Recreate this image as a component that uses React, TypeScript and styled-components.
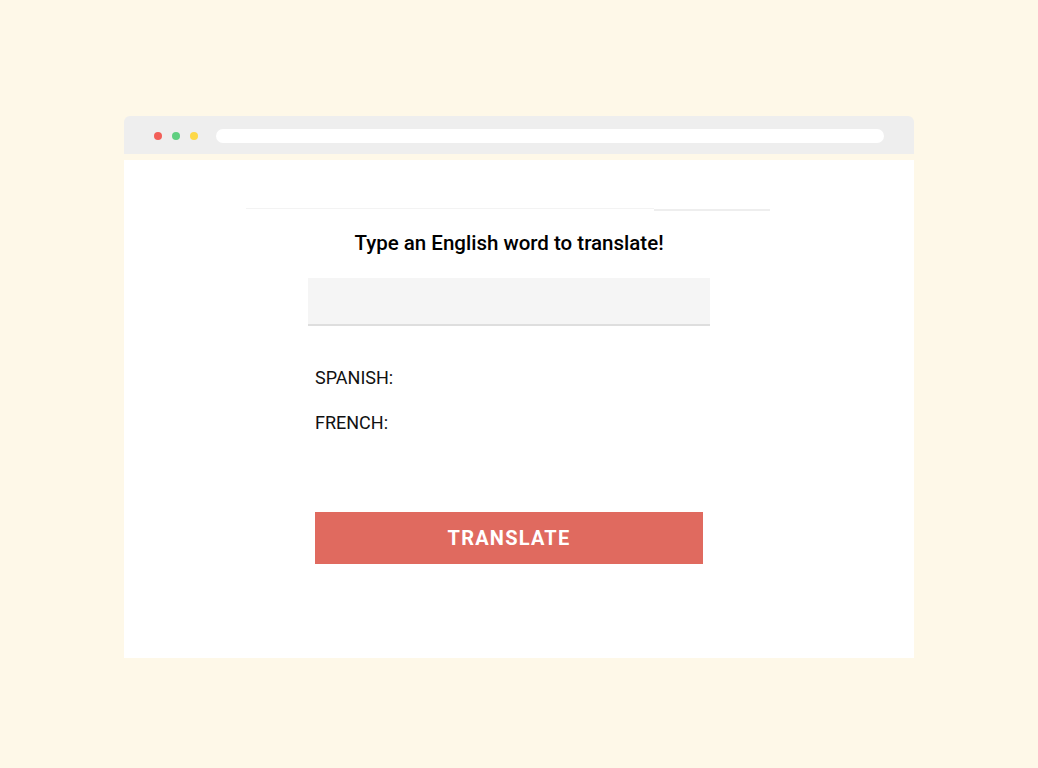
import React from "react";
import styled, { createGlobalStyle } from "styled-components";

const Global = createGlobalStyle`
  html, body { margin: 0; padding: 0; background: #fef8e8; }
  body { font-family: Roboto, "Liberation Sans", sans-serif; }
`;

const Page = styled.div`
  width: 1038px;
  height: 768px;
  padding: 116px 0 0 124px;
  box-sizing: border-box;
`;

const Window = styled.div`
  width: 790px;
  display: flex;
  flex-direction: column;
  gap: 6px;
`;

const TopBar = styled.div`
  height: 38px;
  box-sizing: border-box;
  padding: 2px 30px 0 30px;
  background: #eeeeee;
  border-radius: 6px 6px 0 0;
  display: flex;
  align-items: center;
`;

const Dots = styled.div`
  display: flex;
  gap: 10px;
  margin-right: 18px;
`;

const Dot = styled.span<{ $c: string }>`
  width: 8px;
  height: 8px;
  border-radius: 50%;
  background: ${(p) => p.$c};
`;

const UrlBar = styled.div`
  flex: 1;
  height: 14px;
  border-radius: 7px;
  background: #ffffff;
`;

const Content = styled.div`
  height: 498px;
  background: #ffffff;
  box-sizing: border-box;
  padding-top: 48px;
  display: flex;
  flex-direction: column;
`;

const TabRule = styled.div`
  display: flex;
  align-items: flex-start;
  margin-left: 122px;
  height: 3px;
`;

const Seg = styled.div<{ $w: number; $h: number; $off: number; $c: string }>`
  width: ${(p) => p.$w}px;
  height: ${(p) => p.$h}px;
  margin-top: ${(p) => p.$off}px;
  background: ${(p) => p.$c};
`;

const Column = styled.div`
  margin-left: 184px;
  width: 402px;
  display: flex;
  flex-direction: column;
`;

const Heading = styled.h1`
  margin: 20px 0 0 0;
  font-size: 20.5px;
  line-height: 24px;
  font-weight: 500;
  color: #000000;
  text-align: center;
`;

const Input = styled.input`
  margin-top: 23px;
  height: 48px;
  box-sizing: border-box;
  border: none;
  border-bottom: 2px solid #dedede;
  background: #f5f5f5;
  outline: none;
  padding: 0 8px;
  font: inherit;
`;

const Results = styled.div`
  margin-top: 42px;
  padding-left: 7px;
  display: flex;
  flex-direction: column;
  gap: 25px;
`;

const Label = styled.div`
  font-size: 18px;
  line-height: 20px;
  color: #111111;
`;

const Button = styled.button`
  margin: 79px 7px 0 7px;
  height: 52px;
  border: none;
  background: #e06a5f;
  color: #ffffff;
  font-family: Roboto, "Liberation Sans", sans-serif;
  font-weight: 700;
  font-size: 20px;
  letter-spacing: 1.2px;
  cursor: pointer;
`;

export default function App() {
  return (
    <>
      <Global />
      <Page>
        <Window>
          <TopBar>
            <Dots>
              <Dot $c="#f25f58" />
              <Dot $c="#5fcf80" />
              <Dot $c="#fdd848" />
            </Dots>
            <UrlBar />
          </TopBar>
          <Content>
            <TabRule>
              <Seg $w={408} $h={1} $off={0} $c="#f3f3f3" />
              <Seg $w={116} $h={2} $off={1} $c="#eeeeee" />
            </TabRule>
            <Column>
              <Heading>Type an English word to translate!</Heading>
              <Input type="text" aria-label="English word" />
              <Results>
                <Label>SPANISH:</Label>
                <Label>FRENCH:</Label>
              </Results>
              <Button>TRANSLATE</Button>
            </Column>
          </Content>
        </Window>
      </Page>
    </>
  );
}
